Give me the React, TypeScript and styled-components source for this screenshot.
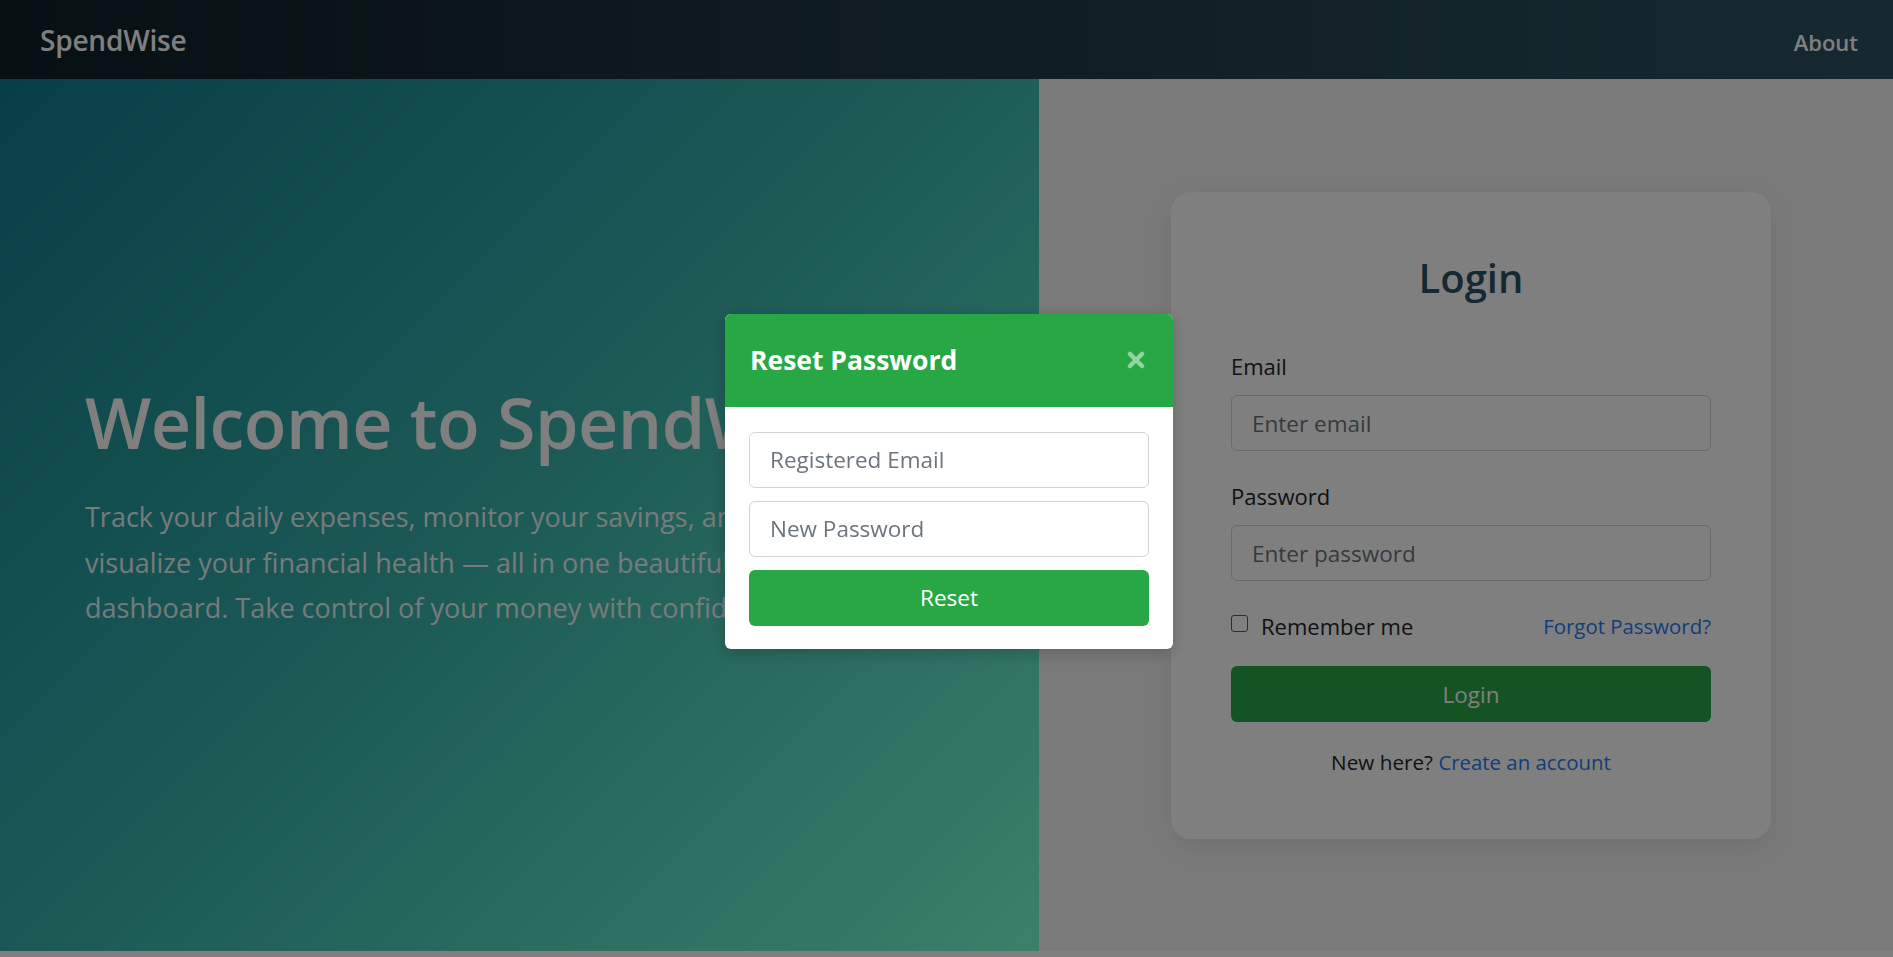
import React from "react";
import styled, { createGlobalStyle } from "styled-components";

const GlobalStyle = createGlobalStyle`
  * { box-sizing: border-box; }
  html, body { margin: 0; padding: 0; background: #ffffff; }
  body { font-family: "Open Sans", "Noto Sans", Arial, sans-serif; color: #212529; }
`;

const Page = styled.div`
  width: 100%;
  min-height: 957px;
`;

const Navbar = styled.header`
  height: 79px;
  display: flex;
  align-items: center;
  justify-content: space-between;
  padding: 0 35px 0 40px;
  background: linear-gradient(to right, #0f2027, #203a43, #2c5364);
`;

const Brand = styled.a`
  color: #ffffff;
  font-size: 28px;
  font-weight: 600;
  letter-spacing: -0.2px;
  text-decoration: none;
`;

const NavLink = styled.a`
  color: #ffffff;
  font-size: 22px;
  font-weight: 600;
  text-decoration: none;
  margin-top: 4px;
`;

const Main = styled.main`
  display: flex;
  height: 872px;
`;

const Hero = styled.section`
  flex: 0 0 1039px;
  display: flex;
  flex-direction: column;
  justify-content: center;
  padding: 0 85px 19px 85px;
  background: linear-gradient(135deg, #0e7e8e 0%, #3bb6ad 50%, #78ffd6 100%);
  color: #ffffff;
`;

const HeroTitle = styled.h1`
  margin: 0 0 30px 0;
  font-size: 70px;
  font-weight: 600;
  line-height: 1.2;
  white-space: nowrap;
  letter-spacing: -0.5px;
`;

const HeroText = styled.p`
  margin: 0;
  font-size: 27px;
  line-height: 45.6px;
  color: rgba(255, 255, 255, 0.92);
  max-width: 750px;
`;

const LoginPane = styled.section`
  flex: 1;
  display: flex;
  align-items: center;
  justify-content: center;
  padding: 1px 0 0 10px;
  background: #f4f4f4;
`;

const Card = styled.div`
  width: 600px;
  padding: 60px;
  background: #ffffff;
  border-radius: 20px;
  box-shadow: 0 8px 28px rgba(0, 0, 0, 0.08);
`;

const CardTitle = styled.h2`
  margin: 0 0 45px 0;
  text-align: center;
  font-size: 40px;
  font-weight: 600;
  line-height: 52px;
  color: #2c5364;
`;

const Field = styled.div`
  margin-bottom: 28px;
`;

const Label = styled.label`
  display: block;
  font-size: 22px;
  line-height: 34px;
  margin-bottom: 12px;
  color: #212529;
`;

const Input = styled.input`
  display: block;
  width: 100%;
  height: 56px;
  padding: 10px 20px;
  font-family: inherit;
  font-size: 22.5px;
  color: #212529;
  background: #ffffff;
  border: 1px solid #ced4da;
  border-radius: 6px;
  outline: none;
  &::placeholder { color: #6c757d; opacity: 1; }
`;

const OptionsRow = styled.div`
  display: flex;
  align-items: center;
  justify-content: space-between;
  height: 34px;
  margin-bottom: 23px;
`;

const CheckLabel = styled.label`
  display: flex;
  align-items: center;
  gap: 13px;
  font-size: 22px;
  color: #212529;
`;

const Checkbox = styled.input`
  appearance: none;
  width: 17px;
  height: 17px;
  margin: 0 0 6px 0;
  border: 1.5px solid #5a5a5a;
  border-radius: 3px;
  background: #ffffff;
`;

const Link = styled.a`
  color: #1e7cf0;
  font-size: 20.4px;
  text-decoration: none;
`;

const PrimaryButton = styled.button`
  display: block;
  width: 100%;
  height: 56px;
  border: none;
  border-radius: 6px;
  background: #28a745;
  color: #ffffff;
  font-family: inherit;
  font-size: 22.5px;
`;

const SignupLine = styled.p`
  margin: 23px 0 0 0;
  text-align: center;
  font-size: 20.7px;
  line-height: 34px;
  color: #212529;
`;

const Backdrop = styled.div`
  position: fixed;
  inset: 0;
  background: rgba(0, 0, 0, 0.5);
`;

const ModalLayer = styled.div`
  position: fixed;
  inset: 0;
  display: flex;
  align-items: center;
  justify-content: center;
  padding: 5px 0 0 5px;
`;

const Modal = styled.div`
  width: 448px;
  background: #ffffff;
  border-radius: 6px;
  overflow: hidden;
  box-shadow: 0 4px 16px rgba(0, 0, 0, 0.2);
`;

const ModalHeader = styled.div`
  display: flex;
  align-items: center;
  justify-content: space-between;
  padding: 24px 28px 25px 25px;
  background: #28a745;
`;

const ModalTitle = styled.h4`
  margin: 0;
  font-size: 26.5px;
  font-weight: 700;
  line-height: 44px;
  color: #ffffff;
`;

const CloseButton = styled.button`
  display: flex;
  align-items: center;
  justify-content: center;
  width: 18px;
  height: 18px;
  padding: 0;
  border: none;
  background: transparent;
  opacity: 0.5;
`;

const ModalBody = styled.div`
  display: flex;
  flex-direction: column;
  gap: 13px;
  padding: 25px 24px 23px 24px;
`;

export default function App() {
  return (
    <Page>
      <GlobalStyle />
      <Navbar>
        <Brand href="#">SpendWise</Brand>
        <NavLink href="#">About</NavLink>
      </Navbar>
      <Main>
        <Hero>
          <HeroTitle>Welcome to SpendWise</HeroTitle>
          <HeroText>
            Track your daily expenses, monitor your savings, and visualize your financial health — all in one
            beautiful dashboard. Take control of your money with confidence.
          </HeroText>
        </Hero>
        <LoginPane>
          <Card>
            <CardTitle>Login</CardTitle>
            <Field>
              <Label htmlFor="email">Email</Label>
              <Input id="email" type="email" placeholder="Enter email" />
            </Field>
            <Field>
              <Label htmlFor="password">Password</Label>
              <Input id="password" type="password" placeholder="Enter password" />
            </Field>
            <OptionsRow>
              <CheckLabel>
                <Checkbox type="checkbox" />
                Remember me
              </CheckLabel>
              <Link href="#">Forgot Password?</Link>
            </OptionsRow>
            <PrimaryButton type="button">Login</PrimaryButton>
            <SignupLine>
              New here? <Link href="#">Create an account</Link>
            </SignupLine>
          </Card>
        </LoginPane>
      </Main>
      <Backdrop />
      <ModalLayer>
        <Modal>
          <ModalHeader>
            <ModalTitle>Reset Password</ModalTitle>
            <CloseButton type="button" aria-label="Close">
              <svg width="18" height="18" viewBox="0 0 18 18">
                <path d="M3 3 L15 15 M15 3 L3 15" stroke="#ffffff" strokeWidth="4.5" strokeLinecap="round" />
              </svg>
            </CloseButton>
          </ModalHeader>
          <ModalBody>
            <Input type="email" placeholder="Registered Email" />
            <Input type="password" placeholder="New Password" />
            <PrimaryButton type="button">Reset</PrimaryButton>
          </ModalBody>
        </Modal>
      </ModalLayer>
    </Page>
  );
}
